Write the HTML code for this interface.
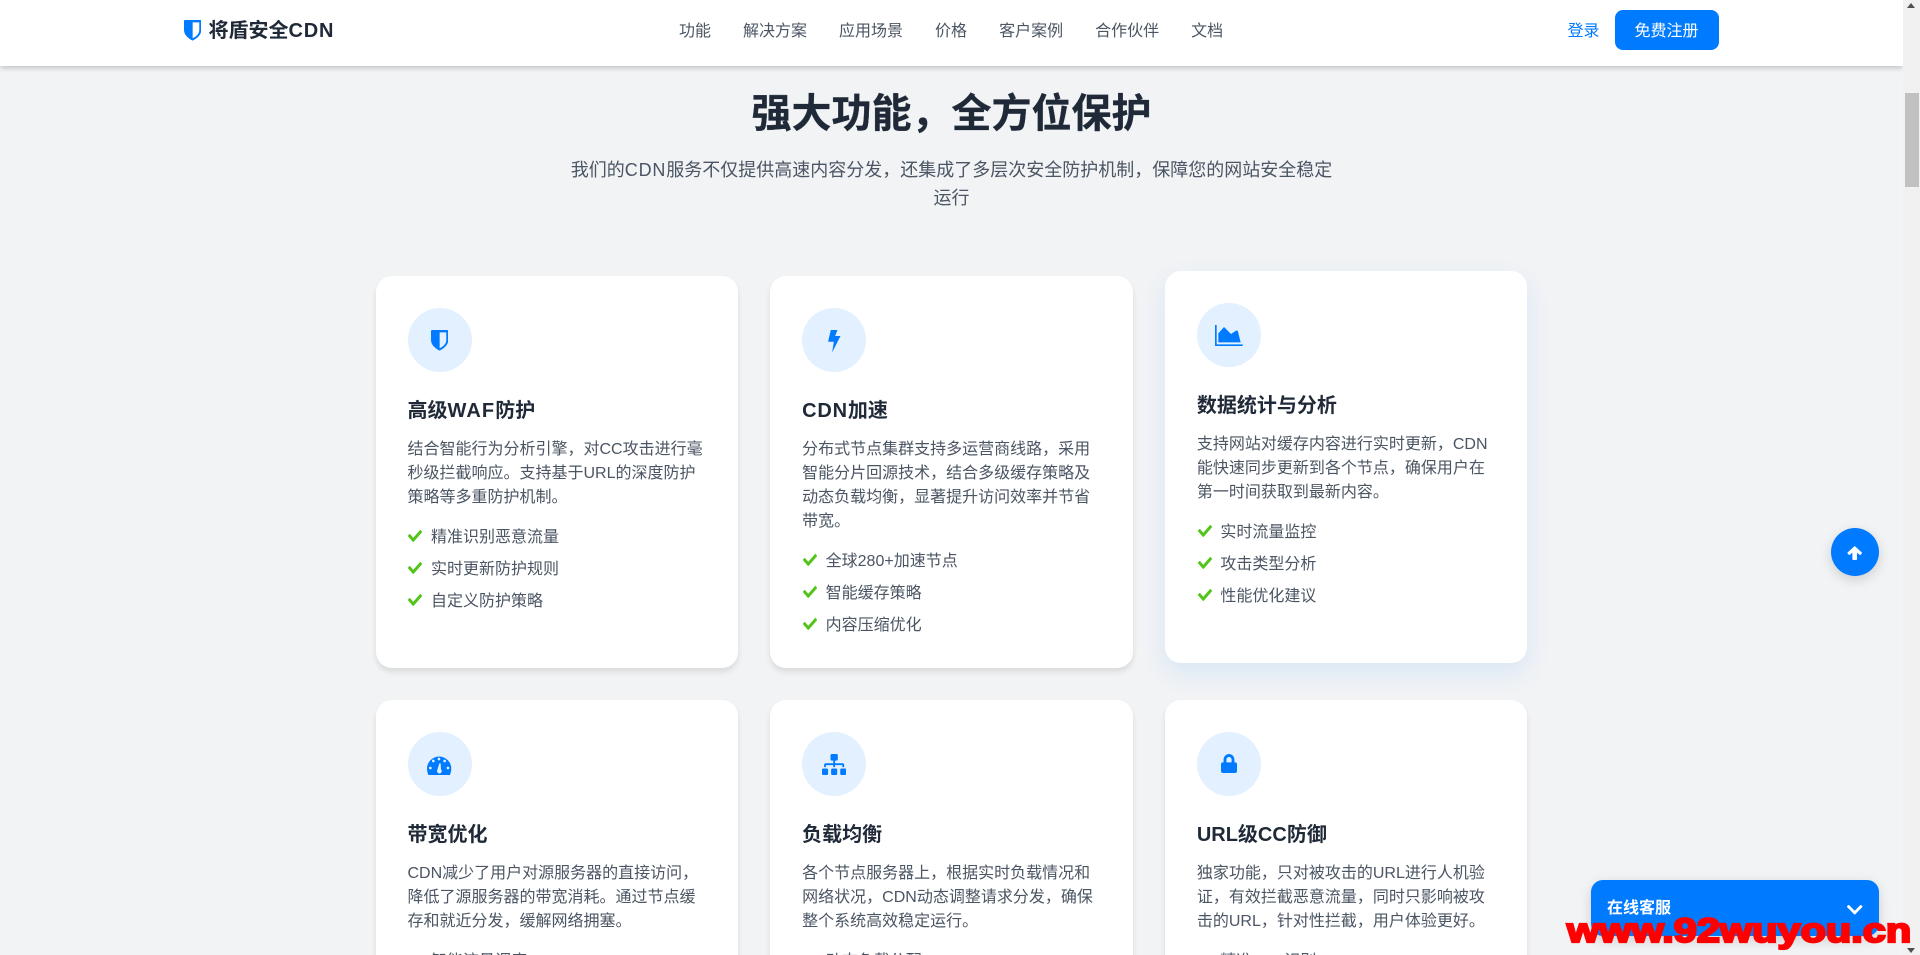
<!DOCTYPE html>
<html lang="zh-CN">
<head>
<meta charset="utf-8">
<title>将盾安全CDN</title>
<style>
*{margin:0;padding:0;box-sizing:border-box}
html,body{width:1920px;height:955px;overflow:hidden}
body{position:relative;background:#f1f3f5;font-family:"Liberation Sans","Noto Sans CJK SC",sans-serif;color:#4b5563;font-size:16px}
svg{display:block;fill:currentColor}
.abs{position:absolute}
.ls{letter-spacing:.8px}
header{position:absolute;left:0;top:0;width:1903px;height:66px;background:#fff;box-shadow:0 2px 5px rgba(0,0,0,.2);z-index:5}
.logo{position:absolute;left:208.5px;top:16px;font-size:20px;line-height:30px;font-weight:700;color:#1f2937;white-space:nowrap}
nav{position:absolute;left:679px;top:20px;display:flex;gap:32px;line-height:24px;white-space:nowrap}
.login{position:absolute;left:1567.5px;top:20px;line-height:24px;color:#007bff}
.reg{position:absolute;left:1614.5px;top:10px;width:104px;height:40px;background:#007bff;color:#fff;border-radius:8px;text-align:center;line-height:44px}
h1{position:absolute;left:0;width:1903px;top:89.5px;text-align:center;font-size:40px;line-height:48px;font-weight:700;color:#1f2937;-webkit-text-stroke:.3px #1f2937}
.sub{position:absolute;left:567.5px;top:157px;width:768px;text-align:center;font-size:18px;line-height:27.5px}
.card{position:absolute;width:362.67px;height:392px;background:#fff;border-radius:16px;padding:32px;box-shadow:0 4px 6px rgba(0,0,0,.1)}
.card.hov{box-shadow:0 10px 25px rgba(0,123,255,.1)}
.ic{width:64px;height:64px;border-radius:50%;background:#e3f0ff;color:#007bff;position:relative;margin-bottom:24px}
.ic svg{position:absolute}
h3{position:relative;top:1px;font-size:20px;line-height:28px;font-weight:700;color:#1f2937;margin-bottom:12px;white-space:nowrap}
.card p{position:relative;top:2px;line-height:24px;font-size:16px}
ul{list-style:none;margin-top:17.7px}
li{position:relative;height:24px;line-height:24px;margin-bottom:8px;padding-left:23.5px;white-space:nowrap}
li svg{position:absolute;left:.7px;top:4.7px;width:14px;height:12px;color:#52c41a}
.top{position:absolute;left:1831px;top:528px;width:48px;height:48px;border-radius:50%;background:#007bff;color:#fff;box-shadow:0 4px 12px rgba(0,0,0,.15);z-index:6}
.chat{position:absolute;left:1591px;top:880px;width:288px;height:56px;border-radius:12px;background:#007bff;color:#fff;box-shadow:0 4px 12px rgba(0,0,0,.15);z-index:6}
.chat span{position:absolute;left:16px;top:17px;line-height:24px;font-weight:700}
.sb{position:absolute;left:1903px;top:0;width:17px;height:955px;background:#f1f1f1;z-index:7}
.thumb{position:absolute;left:2px;top:93px;width:14px;height:94px;background:#c1c1c1}
.up{position:absolute;left:4px;top:3px;width:0;height:0;border-left:4px solid transparent;border-right:4px solid transparent;border-bottom:5px solid #505050}
.down{position:absolute;left:4px;top:948px;width:0;height:0;border-left:4px solid transparent;border-right:4px solid transparent;border-top:5px solid #505050}
.wm{position:absolute;left:1567px;top:908px;font-family:"Liberation Sans",sans-serif;font-size:34px;line-height:46px;font-weight:700;color:#f00;-webkit-text-stroke:2.2px #f00;transform:scaleX(1.22);transform-origin:0 0;white-space:nowrap;z-index:8}
</style>
</head>
<body>
<header>
  <svg class="abs" style="left:183.5px;top:20px;width:17.3px;height:20.6px;color:#007bff" viewBox="0 0 52 62"><path fill-rule="evenodd" d="M0 3Q0 0 3 0H49Q52 0 52 3V30C52 46 38 56 26 62C14 56 0 46 0 30ZM26 7V55C36 50 46 42 46 30V7Z"/></svg>
  <div class="logo">将盾安全<span class="ls">CDN</span></div>
  <nav><span>功能</span><span>解决方案</span><span>应用场景</span><span>价格</span><span>客户案例</span><span>合作伙伴</span><span>文档</span></nav>
  <div class="login">登录</div>
  <div class="reg">免费注册</div>
</header>

<h1>强大功能，全方位保护</h1>
<div class="sub">我们的<span class="ls">CDN</span>服务不仅提供高速内容分发，还集成了多层次安全防护机制，保障您的网站安全稳定运行</div>

<div class="card" style="left:375.5px;top:276px">
  <div class="ic"><svg style="left:23px;top:22px;width:17.3px;height:20.6px" viewBox="0 0 52 62"><path fill-rule="evenodd" d="M0 3Q0 0 3 0H49Q52 0 52 3V30C52 46 38 56 26 62C14 56 0 46 0 30ZM26 7V55C36 50 46 42 46 30V7Z"/></svg></div>
  <h3>高级<span style="letter-spacing:1.1px">WAF</span>防护</h3>
  <p>结合智能行为分析引擎，对CC攻击进行毫秒级拦截响应。支持基于URL的深度防护策略等多重防护机制。</p>
  <ul>
    <li><svg viewBox="0 64 512 384" preserveAspectRatio="none"><path d="M173.898 439.404l-166.4-166.4c-9.997-9.997-9.997-26.206 0-36.204l36.203-36.204c9.997-9.998 26.207-9.998 36.204 0L192 312.69 432.095 72.596c9.997-9.997 26.207-9.997 36.204 0l36.203 36.204c9.997 9.997 9.997 26.206 0 36.204l-294.4 294.401c-9.998 9.997-26.207 9.997-36.204-.001z"/></svg>精准识别恶意流量</li>
    <li><svg viewBox="0 64 512 384" preserveAspectRatio="none"><path d="M173.898 439.404l-166.4-166.4c-9.997-9.997-9.997-26.206 0-36.204l36.203-36.204c9.997-9.998 26.207-9.998 36.204 0L192 312.69 432.095 72.596c9.997-9.997 26.207-9.997 36.204 0l36.203 36.204c9.997 9.997 9.997 26.206 0 36.204l-294.4 294.401c-9.998 9.997-26.207 9.997-36.204-.001z"/></svg>实时更新防护规则</li>
    <li><svg viewBox="0 64 512 384" preserveAspectRatio="none"><path d="M173.898 439.404l-166.4-166.4c-9.997-9.997-9.997-26.206 0-36.204l36.203-36.204c9.997-9.998 26.207-9.998 36.204 0L192 312.69 432.095 72.596c9.997-9.997 26.207-9.997 36.204 0l36.203 36.204c9.997 9.997 9.997 26.206 0 36.204l-294.4 294.401c-9.998 9.997-26.207 9.997-36.204-.001z"/></svg>自定义防护策略</li>
  </ul>
</div>

<div class="card" style="left:770.17px;top:276px">
  <div class="ic"><svg style="left:25.8px;top:22px;width:12.6px;height:22.4px" viewBox="0 0 37 67"><path d="M8 0H28L21 18H37L12 67L17 35H0Z"/></svg></div>
  <h3><span class="ls">CDN</span>加速</h3>
  <p>分布式节点集群支持多运营商线路，采用智能分片回源技术，结合多级缓存策略及动态负载均衡，显著提升访问效率并节省带宽。</p>
  <ul>
    <li><svg viewBox="0 64 512 384" preserveAspectRatio="none"><path d="M173.898 439.404l-166.4-166.4c-9.997-9.997-9.997-26.206 0-36.204l36.203-36.204c9.997-9.998 26.207-9.998 36.204 0L192 312.69 432.095 72.596c9.997-9.997 26.207-9.997 36.204 0l36.203 36.204c9.997 9.997 9.997 26.206 0 36.204l-294.4 294.401c-9.998 9.997-26.207 9.997-36.204-.001z"/></svg>全球280+加速节点</li>
    <li><svg viewBox="0 64 512 384" preserveAspectRatio="none"><path d="M173.898 439.404l-166.4-166.4c-9.997-9.997-9.997-26.206 0-36.204l36.203-36.204c9.997-9.998 26.207-9.998 36.204 0L192 312.69 432.095 72.596c9.997-9.997 26.207-9.997 36.204 0l36.203 36.204c9.997 9.997 9.997 26.206 0 36.204l-294.4 294.401c-9.998 9.997-26.207 9.997-36.204-.001z"/></svg>智能缓存策略</li>
    <li><svg viewBox="0 64 512 384" preserveAspectRatio="none"><path d="M173.898 439.404l-166.4-166.4c-9.997-9.997-9.997-26.206 0-36.204l36.203-36.204c9.997-9.998 26.207-9.998 36.204 0L192 312.69 432.095 72.596c9.997-9.997 26.207-9.997 36.204 0l36.203 36.204c9.997 9.997 9.997 26.206 0 36.204l-294.4 294.401c-9.998 9.997-26.207 9.997-36.204-.001z"/></svg>内容压缩优化</li>
  </ul>
</div>

<div class="card hov" style="left:1164.83px;top:271px">
  <div class="ic"><svg style="left:18px;top:22px;width:27.7px;height:21px" viewBox="0 0 83 63"><path d="M0 0H5V58H83V63H0Z"/><path d="M10 25L27 6L48 27L63 17H68L77 52H10Z"/></svg></div>
  <h3>数据统计与分析</h3>
  <p>支持网站对缓存内容进行实时更新，CDN能快速同步更新到各个节点，确保用户在第一时间获取到最新内容。</p>
  <ul>
    <li><svg viewBox="0 64 512 384" preserveAspectRatio="none"><path d="M173.898 439.404l-166.4-166.4c-9.997-9.997-9.997-26.206 0-36.204l36.203-36.204c9.997-9.998 26.207-9.998 36.204 0L192 312.69 432.095 72.596c9.997-9.997 26.207-9.997 36.204 0l36.203 36.204c9.997 9.997 9.997 26.206 0 36.204l-294.4 294.401c-9.998 9.997-26.207 9.997-36.204-.001z"/></svg>实时流量监控</li>
    <li><svg viewBox="0 64 512 384" preserveAspectRatio="none"><path d="M173.898 439.404l-166.4-166.4c-9.997-9.997-9.997-26.206 0-36.204l36.203-36.204c9.997-9.998 26.207-9.998 36.204 0L192 312.69 432.095 72.596c9.997-9.997 26.207-9.997 36.204 0l36.203 36.204c9.997 9.997 9.997 26.206 0 36.204l-294.4 294.401c-9.998 9.997-26.207 9.997-36.204-.001z"/></svg>攻击类型分析</li>
    <li><svg viewBox="0 64 512 384" preserveAspectRatio="none"><path d="M173.898 439.404l-166.4-166.4c-9.997-9.997-9.997-26.206 0-36.204l36.203-36.204c9.997-9.998 26.207-9.998 36.204 0L192 312.69 432.095 72.596c9.997-9.997 26.207-9.997 36.204 0l36.203 36.204c9.997 9.997 9.997 26.206 0 36.204l-294.4 294.401c-9.998 9.997-26.207 9.997-36.204-.001z"/></svg>性能优化建议</li>
  </ul>
</div>

<div class="card" style="left:375.5px;top:700px">
  <div class="ic"><svg style="left:19.8px;top:24px;width:24.3px;height:19px;overflow:visible" viewBox="0 0 73 57"><path d="M0 38A36.5 36.5 0 0 1 73 38C73 45 71 51 69 57H4C2 51 0 45 0 38Z"/><g fill="#e3f0ff"><circle cx="10" cy="36" r="4"/><circle cx="19" cy="15" r="4"/><circle cx="36" cy="9" r="4"/><circle cx="53" cy="15" r="4"/><circle cx="63" cy="36" r="4"/><path d="M37 22H41L42 40A7 7 0 1 1 31 42Z"/></g></svg></div>
  <h3>带宽优化</h3>
  <p>CDN减少了用户对源服务器的直接访问，降低了源服务器的带宽消耗。通过节点缓存和就近分发，缓解网络拥塞。</p>
  <ul><li>智能流量调度</li></ul>
</div>

<div class="card" style="left:770.17px;top:700px">
  <div class="ic"><svg style="left:20px;top:22px;width:24.3px;height:21px" viewBox="0 0 640 512" preserveAspectRatio="none"><path d="M128 352H32c-17.67 0-32 14.33-32 32v96c0 17.67 14.33 32 32 32h96c17.67 0 32-14.33 32-32v-96c0-17.67-14.33-32-32-32zm-24-80h192v48h48v-48h192v48h48v-57.59c0-21.17-17.23-38.41-38.41-38.41H344v-64h40c17.67 0 32-14.33 32-32V32c0-17.67-14.33-32-32-32H256c-17.67 0-32 14.33-32 32v96c0 17.67 14.33 32 32 32h40v64H94.41C73.23 224 56 241.23 56 262.41V320h48v-48zm264 80h-96c-17.67 0-32 14.33-32 32v96c0 17.67 14.33 32 32 32h96c17.67 0 32-14.33 32-32v-96c0-17.67-14.33-32-32-32zm240 0h-96c-17.67 0-32 14.33-32 32v96c0 17.67 14.33 32 32 32h96c17.67 0 32-14.33 32-32v-96c0-17.67-14.33-32-32-32z"/></svg></div>
  <h3>负载均衡</h3>
  <p>各个节点服务器上，根据实时负载情况和网络状况，CDN动态调整请求分发，确保整个系统高效稳定运行。</p>
  <ul><li>动态负载分配</li></ul>
</div>

<div class="card" style="left:1164.83px;top:700px">
  <div class="ic"><svg style="left:24px;top:22px;width:16px;height:19px" viewBox="0 0 448 512" preserveAspectRatio="none"><path d="M400 224h-24v-72C376 68.2 307.8 0 224 0S72 68.2 72 152v72H48c-26.5 0-48 21.5-48 48v192c0 26.5 21.5 48 48 48h352c26.5 0 48-21.5 48-48V272c0-26.5-21.5-48-48-48zm-104 0H152v-72c0-39.7 32.3-72 72-72s72 32.3 72 72v72z"/></svg></div>
  <h3>URL级CC防御</h3>
  <p>独家功能，只对被攻击的URL进行人机验证，有效拦截恶意流量，同时只影响被攻击的URL，针对性拦截，用户体验更好。</p>
  <ul><li>精准URL识别</li></ul>
</div>

<div class="top"><svg class="abs" style="left:16.3px;top:18px;width:15.4px;height:14px" viewBox="0 0 46 42"><path d="M23 0L44 19Q46 21 44 23L41 26Q39 28 37 26L30 20V39Q30 42 27 42H19Q16 42 16 39V20L9 26Q7 28 5 26L2 23Q0 21 2 19Z"/></svg></div>

<div class="chat"><span>在线客服</span><svg class="abs" style="left:256.3px;top:25px;width:15.4px;height:9.5px" viewBox="5 124 437 264" preserveAspectRatio="none"><path d="M207.029 381.476L12.686 187.132c-9.373-9.373-9.373-24.569 0-33.941l22.667-22.667c9.357-9.357 24.522-9.375 33.901-.04L224 284.505l154.745-154.021c9.379-9.335 24.544-9.317 33.901.04l22.667 22.667c9.373 9.373 9.373 24.569 0 33.941L240.971 381.476c-9.373 9.372-24.569 9.372-33.942 0z"/></svg></div>

<div class="sb"><div class="up"></div><div class="thumb"></div><div class="down"></div></div>
<div class="wm">www.92wuyou.cn</div>
</body>
</html>
